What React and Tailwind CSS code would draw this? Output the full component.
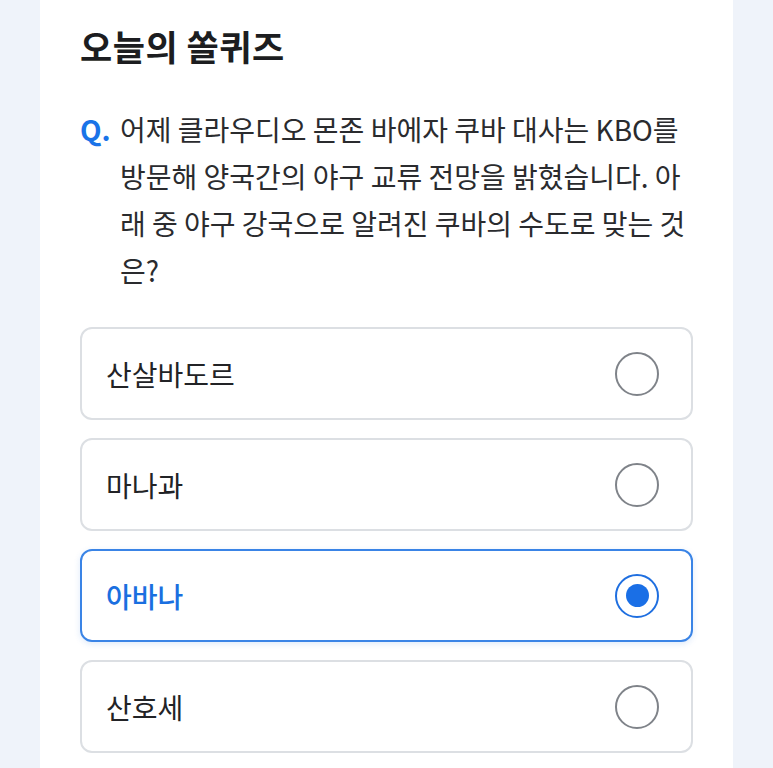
import { useState } from 'react';

const FONT = { fontFamily: '"Noto Sans CJK KR", "Noto Sans", sans-serif' };

const options = ['산살바도르', '마나과', '아바나', '산호세'];

function Radio({ checked }) {
    return (
        <span
            className={
                'flex items-center justify-center w-[44px] h-[44px] rounded-full border-2 ' +
                (checked ? 'border-[#1f6fe0]' : 'border-[#7f8389]')
            }
        >
            {checked && <span className="w-[23px] h-[23px] rounded-full bg-[#1a6fe6]" />}
        </span>
    );
}

export default function App() {
    const [picked, setPicked] = useState(2);

    return (
        <div className="min-h-screen bg-[#eff3fa] px-[40px]" style={FONT}>
            <div className="bg-white min-h-screen px-[40px] pt-[20px] pb-[14px]">
                <h1 className="text-[35px] font-bold text-[#1c1d20] leading-[52px] tracking-[0.5px]">
                    오늘의 쏠퀴즈
                </h1>

                {/* Question */}
                <div className="flex mt-[34px] text-[28px] leading-[47px] text-[#2a2b2e]">
                    <span className="w-[40px] shrink-0 font-bold text-[#1a73e8]">Q.</span>
                    <p className="flex-1 pr-[3px]">
                        어제 클라우디오 몬존 바에자 쿠바 대사는 KBO를 방문해 양국간의 야구 교류 전망을 밝혔습니다. 아래 중 야구 강국으로 알려진 쿠바의 수도로 맞는 것은?
                    </p>
                </div>

                {/* Options */}
                <div className="flex flex-col gap-[18px] mt-[33px]">
                    {options.map((opt, i) => {
                        const on = i === picked;
                        return (
                            <button
                                key={opt}
                                onClick={() => setPicked(i)}
                                className={
                                    'flex items-center justify-between h-[93px] pl-[24px] pr-[32px] rounded-[12px] border-2 bg-white text-left ' +
                                    (on
                                        ? 'border-[#3a84e6] shadow-[0_2px_6px_rgba(31,111,224,0.15)]'
                                        : 'border-[#dcdfe3]')
                                }
                            >
                                <span
                                    className={
                                        'text-[28px] ' +
                                        (on ? 'text-[#1a6fe0] font-medium' : 'text-[#222326]')
                                    }
                                >
                                    {opt}
                                </span>
                                <Radio checked={on} />
                            </button>
                        );
                    })}
                </div>
            </div>
        </div>
    );
}
